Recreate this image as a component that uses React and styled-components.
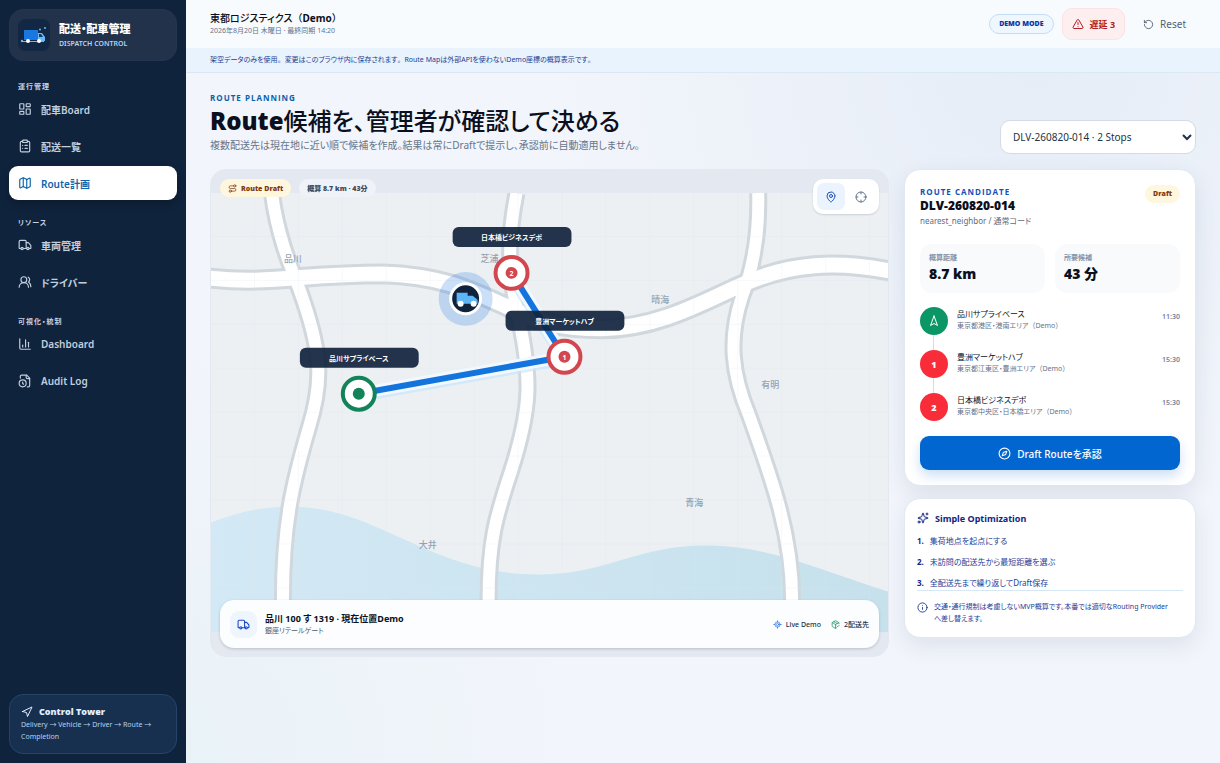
import React from "react";
import styled, { createGlobalStyle, css } from "styled-components";
import {
  LayoutDashboard, ClipboardList, Map as MapIcon, Truck, UsersRound, ChartColumn,
  Navigation, Navigation2, TriangleAlert, RotateCcw, Route, MapPin, Crosshair, LocateFixed,
  Compass, Sparkles, Info, PackageCheck,
} from "lucide-react";

const Global = createGlobalStyle`
  *, *::before, *::after { box-sizing: border-box; }
  body {
    margin: 0;
    font-family: "Noto Sans", "Noto Sans CJK JP", sans-serif;
    font-feature-settings: "palt";
    color: #0b1020;
    font-size: 12px;
  }
  button, select { font: inherit; font-feature-settings: inherit; }
  h1, h2, p, ol { margin: 0; padding: 0; }
`;

const heavy = css`
  font-family: "Open Sans", "Noto Sans CJK JP", sans-serif;
  font-weight: 800;
`;

const Shell = styled.div`
  display: grid;
  grid-template-columns: 186px 1fr;
  min-height: 100vh;
  background:
    radial-gradient(circle at 12% 100%, #e8f2f7 0, rgba(232, 242, 247, 0) 420px),
    radial-gradient(circle at 85% 8%, #e6edf7 0, rgba(230, 237, 247, 0) 480px),
    #f2f5fb;
`;

const Sidebar = styled.aside`
  display: flex;
  flex-direction: column;
  padding: 9px;
  background: #10233d;
  color: #c5d2e2;
`;

const Brand = styled.div`
  display: flex;
  align-items: center;
  gap: 9px;
  height: 52px;
  padding: 0 8px;
  border-radius: 14px;
  background: #21324a;
  border: 1px solid #24364f;
`;

const BrandText = styled.div`
  display: flex;
  flex-direction: column;
  font-size: 7px;
  line-height: 12px;
  font-weight: 600;
  color: #b6d3f5;
  strong { font-size: 11px; line-height: 18px; color: #ffffff; }
`;

const NavTitle = styled.div`
  margin: ${(p) => (p.$first ? "20px" : "17px")} 9px 0;
  font-size: 7px;
  line-height: 11px;
  font-weight: 700;
  letter-spacing: 1px;
`;

const NavList = styled.nav`
  display: flex;
  flex-direction: column;
  gap: 3px;
`;

const NavLink = styled.a`
  display: flex;
  align-items: center;
  gap: 9px;
  height: 34px;
  padding: 0 9px;
  border-radius: 9px;
  color: #c0cede;
  font-size: 10px;
  font-weight: 600;
  text-decoration: none;
  ${(p) => p.$active && css`
    background: #ffffff;
    color: #0d65ab;
    box-shadow: 0 4px 8px rgba(0, 0, 0, 0.25);
  `}
`;

const Tower = styled.div`
  margin-top: auto;
  padding: 10px 11px;
  border: 1px solid #244468;
  border-radius: 14px;
  background: #17304f;
  font-size: 7px;
  line-height: 12px;
  color: #b5d0ee;
`;

const TowerTitle = styled.div`
  display: flex;
  align-items: center;
  gap: 6px;
  height: 14px;
  color: #e1efff;
  font-size: 9px;
  ${heavy}
`;

const Main = styled.div`
  min-width: 0;
`;

const TopBar = styled.header`
  display: flex;
  align-items: center;
  justify-content: space-between;
  height: 48px;
  padding: 0 24px;
  background: #f8fbfe;
`;

const Company = styled.div`
  font-size: 7px;
  line-height: 12px;
  color: #64748b;
  div { font-size: 10px; line-height: 14px; font-weight: 500; color: #0b1020; }
`;

const Actions = styled.div`
  display: flex;
  align-items: center;
  gap: 8px;
`;

const DemoTag = styled.span`
  padding: 0 9px;
  border: 1px solid #c5dcf5;
  border-radius: 10px;
  background: #eef6fe;
  color: #10379f;
  font-size: 7px;
  line-height: 18px;
  ${heavy}
`;

const TopButton = styled.button`
  display: flex;
  align-items: center;
  gap: 6px;
  height: 32px;
  padding: 0 9px;
  border: 1px solid ${(p) => (p.$alert ? "#fde2e3" : "transparent")};
  border-radius: 10px;
  background: ${(p) => (p.$alert ? "#fdefef" : "transparent")};
  color: ${(p) => (p.$alert ? "#b01e24" : "#536174")};
  font-size: ${(p) => (p.$alert ? "9px" : "10px")};
  font-weight: ${(p) => (p.$alert ? 700 : 400)};
`;

const Notice = styled.div`
  padding: 0 24px;
  border-bottom: 1px solid #dbe8f4;
  background: #e9f3fd;
  color: #1d3e93;
  font-size: 7px;
  line-height: 24px;
`;

const Content = styled.main`
  padding: 17px 24px;
`;

const Heading = styled.div`
  display: flex;
  align-items: flex-end;
  justify-content: space-between;
  margin-bottom: 15px;
`;

const Eyebrow = styled.div`
  color: ${(p) => (p.$blue ? "#1450b8" : "#0b61ac")};
  font-size: 8px;
  line-height: ${(p) => (p.$blue ? "13px" : "15px")};
  letter-spacing: 1px;
  ${heavy}
  font-weight: 700;
`;

const Title = styled.h1`
  font-size: 24px;
  line-height: 32px;
  ${heavy}
  span { font-weight: 500; }
`;

const Lead = styled.p`
  color: #64748b;
  font-size: 10px;
  line-height: 17px;
`;

const StopSelect = styled.select`
  width: 196px;
  height: 34px;
  padding: 0 8px;
  border: 1px solid #d3dbe6;
  border-radius: 10px;
  background: #ffffff;
  color: #243244;
  font-size: 10px;
`;

const Columns = styled.div`
  display: grid;
  grid-template-columns: minmax(0, 679fr) minmax(0, 292fr);
  gap: 15px;
  align-items: start;
`;

const MapCard = styled.section`
  position: relative;
  display: flex;
  align-items: center;
  min-height: 488px;
  overflow: hidden;
  border: 1px solid #e4e9f1;
  border-radius: 16px;
  background: #e4e8f0;
  > svg { display: block; width: 100%; height: auto; }
`;

const MapTags = styled.div`
  position: absolute;
  top: 9px;
  left: 9px;
  display: flex;
  gap: 8px;
`;

const Pill = styled.span`
  display: flex;
  align-items: center;
  gap: 4px;
  height: 18px;
  padding: 0 8px;
  border-radius: 9px;
  font-size: 7px;
  ${heavy}
  background: ${(p) => (p.$draft ? "#fff6de" : "#eff3f9")};
  color: ${(p) => (p.$draft ? "#7e3a12" : "#3d4b60")};
`;

const MapTools = styled.div`
  position: absolute;
  top: 9px;
  right: 9px;
  display: flex;
  gap: 2px;
  padding: 4px;
  border-radius: 10px;
  background: #ffffff;
  box-shadow: 0 1px 2px rgba(15, 35, 60, 0.15);
`;

const ToolButton = styled.button`
  display: grid;
  place-items: center;
  width: 28px;
  height: 27px;
  padding: 0;
  border: 0;
  border-radius: 7px;
  background: ${(p) => (p.$on ? "#ebf4fe" : "transparent")};
  color: ${(p) => (p.$on ? "#1d4fb4" : "#64748b")};
`;

const VehicleBar = styled.div`
  position: absolute;
  left: 9px;
  right: 9px;
  bottom: 8px;
  display: flex;
  align-items: center;
  gap: 8px;
  height: 48px;
  padding: 0 10px;
  border-radius: 14px;
  background: #fbfdfe;
  box-shadow: 0 1px 3px rgba(15, 35, 60, 0.2);
`;

const VehicleIcon = styled.div`
  display: grid;
  place-items: center;
  width: 27px;
  height: 27px;
  border-radius: 9px;
  background: #eff5fd;
  color: #1d49c0;
`;

const VehicleText = styled.div`
  flex: 1;
  font-size: 7px;
  line-height: 11px;
  color: #4c5b70;
  strong { display: block; font-size: 9px; line-height: 12px; color: #0b1020; }
`;

const StatusList = styled.div`
  display: flex;
  gap: 10px;
`;

const Status = styled.span`
  display: flex;
  align-items: center;
  gap: 4px;
  font-size: 7px;
  font-weight: 500;
  color: #243244;
  svg { color: ${(p) => p.$tone}; }
`;

const Side = styled.div`
  display: flex;
  flex-direction: column;
  gap: 12px;
`;

const Card = styled.section`
  padding: ${(p) => (p.$tight ? "12px" : "15px")};
  border: 1px solid #e2e8f1;
  border-radius: 16px;
  background: #ffffff;
  box-shadow: 0 8px 22px rgba(40, 60, 100, 0.1);
`;

const CardHead = styled.div`
  display: flex;
  align-items: flex-start;
  justify-content: space-between;
  color: #5e6c80;
  font-size: 8px;
  line-height: 14px;
  h2 { color: #0b1020; font-size: 12px; line-height: 16px; ${heavy} }
`;

const Stats = styled.div`
  display: grid;
  grid-template-columns: 1fr 1fr;
  gap: 10px;
  margin: 16px 0 14px;
`;

const Stat = styled.div`
  height: 49px;
  padding: 8px 9px;
  border-radius: 12px;
  background: #f8fafc;
  color: #8492a8;
  font-size: 7px;
  line-height: 12px;
  font-weight: 700;
  strong { display: block; color: #0b1020; font-size: 14px; line-height: 20px; ${heavy} }
`;

const Stop = styled.li`
  position: relative;
  display: flex;
  gap: 9px;
  height: 43px;
  &:last-child { height: 28px; }
  &:not(:last-child)::before {
    content: "";
    position: absolute;
    left: 13px;
    top: 28px;
    bottom: 0;
    width: 1px;
    background: #d5dde7;
  }
`;

const Stops = styled.ol`
  list-style: none;
`;

const Badge = styled.span`
  display: grid;
  place-items: center;
  width: 28px;
  height: 28px;
  border-radius: 50%;
  background: ${(p) => (p.$start ? "#0a9765" : "#f92d3a")};
  color: #ffffff;
  font-size: 9px;
  ${heavy}
`;

const StopText = styled.div`
  flex: 1;
  padding-top: 1px;
  font-size: 7px;
  line-height: 11px;
  color: #64748b;
  strong { display: block; color: #0b1020; font-size: 8px; line-height: 12px; font-weight: 400; }
`;

const Time = styled.time`
  padding-top: 4px;
  color: #75849a;
  font-size: 7px;
  line-height: 11px;
  font-weight: 600;
`;

const Approve = styled.button`
  display: flex;
  align-items: center;
  justify-content: center;
  gap: 6px;
  width: 100%;
  height: 34px;
  margin-top: 15px;
  border: 0;
  border-radius: 9px;
  background: #0266d1;
  color: #ffffff;
  font-size: 10px;
  font-weight: 500;
  box-shadow: 0 6px 12px rgba(2, 102, 209, 0.2);
`;

const RuleTitle = styled.h2`
  display: flex;
  align-items: center;
  gap: 6px;
  height: 14px;
  margin-bottom: 5px;
  color: #14257f;
  font-size: 9px;
  font-weight: 700;
`;

const Rules = styled.ol`
  color: #1c3d9b;
  font-size: 8px;
  line-height: 21px;
  list-style: none;
  li { display: flex; gap: 6px; }
  b { color: #12288a; }
`;

const Hint = styled.p`
  display: flex;
  gap: 6px;
  padding: 10px 10px 0 0;
  margin-top: -3px;
  border-top: 1px solid #d6e7f5;
  color: #1c3d9b;
  font-size: 7px;
  line-height: 12px;
  svg { flex: none; margin-top: 1px; }
`;

const FullWidth = styled.span`
  font-feature-settings: normal;
`;

/* Kana are set proportionally; punctuation keeps its full-width box. */
const Ja = ({ children }) =>
  children.split(/([、。（）])/).map((part, i) => (i % 2 ? <FullWidth key={i}>{part}</FullWidth> : part));

const LogoTruck = () => (
  <svg width="32" height="32" viewBox="0 0 32 32" aria-hidden="true">
    <rect width="32" height="32" rx="8" fill="#122743" />
    <path d="M6 11h14v10H6z" fill="#1977e0" />
    <path d="M20 14h4l3 4v4h-7z" fill="#69b8fa" />
    <path d="M21 15h2l2 3h-4z" fill="#17375c" />
    <path d="M3 22.500h23" stroke="#69b8fa" />
    <circle cx="10" cy="22" r="2" fill="#fff" />
    <circle cx="21" cy="22" r="2" fill="#fff" />
    <circle cx="22" cy="10.500" r="1" fill="#69b8fa" />
    <circle cx="27" cy="9" r="1" fill="#69b8fa" />
    <circle cx="4" cy="22" r="1.200" fill="#69b8fa" />
  </svg>
);

const AuditIcon = ({ size }) => (
  <svg width={size} height={size} viewBox="0 0 24 24" fill="none" stroke="currentColor" strokeWidth="2" strokeLinecap="round" strokeLinejoin="round" aria-hidden="true">
    <path d="M16 22h2a2 2 0 0 0 2-2V7l-5-5H6a2 2 0 0 0-2 2v3" />
    <path d="M14 2v4a2 2 0 0 0 2 2h4" />
    <circle cx="8" cy="16" r="6" />
    <path d="M9.500 17.500 8 16.250V14" />
  </svg>
);

const roads = [
  { d: "M-4 85C60 92 90 81 172 81C235 83 265 100 299 115C330 130 350 136 391 136C450 136 500 105 536 90C580 71 625 67 684 79", w: 21 },
  { d: "M61 0C66 40 78 70 88 95C112 160 112 190 98 235C82 290 72 330 72 407V440", w: 18 },
  { d: "M306 0C298 40 297 75 306 115C322 185 321 215 300 280C285 325 278 350 278 407V440", w: 18 },
  { d: "M548 0C549 40 543 75 532 103C518 145 521 180 539 223C560 282 582 340 582 407V440", w: 18 },
];

const places = [
  ["品川", 82, 66], ["芝浦", 279, 66], ["晴海", 450, 107], ["有明", 560, 192], ["青海", 484, 310], ["大井", 217, 353],
];

const Pin = ({ x, y, n, label }) => (
  <g>
    <rect x={x - 59} y={y - 46} width="119" height="20" rx="6" fill="#10233d" fillOpacity="0.92" />
    <text x={x} y={y - 33} textAnchor="middle" fontSize="7" fontWeight="700" fill="#fff">{label}</text>
    <circle cx={x} cy={y} r="16" fill="#fff" stroke={n ? "#d2464e" : "#138359"} strokeWidth="4" />
    <circle cx={x} cy={y} r="6" fill={n ? "#d2464e" : "#138359"} />
    {n && <text x={x} y={y + 3} textAnchor="middle" fontSize="7" fontWeight="700" fill="#fff">{n}</text>}
  </g>
);

const CityMap = () => (
  <svg viewBox="0 0 678 440" role="img" aria-label="Route Map">
    <defs>
      <pattern id="grid" width="44" height="44" patternUnits="userSpaceOnUse">
        <path d="M44 0V44H0" fill="none" stroke="#dce3e9" />
      </pattern>
      <linearGradient id="water" x1="0" x2="1">
        <stop offset="0" stopColor="#d3e9f5" />
        <stop offset="1" stopColor="#c6e1ec" />
      </linearGradient>
    </defs>
    <rect width="678" height="440" fill="#ecf0f3" />
    <path d="M0 330C55 309 100 308 155 330C215 355 260 383 330 382C400 381 425 353 496 353C560 353 610 378 678 399V440H0Z" fill="url(#water)" />
    {roads.map((r) => <path key={r.d} d={r.d} fill="none" stroke="#d0d7dd" strokeWidth={r.w} />)}
    {roads.map((r) => <path key={r.d} d={r.d} fill="none" stroke="#fff" strokeWidth={r.w - 6} />)}
    <rect width="678" height="440" fill="url(#grid)" opacity="0.5" />
    {places.map(([t, x, y]) => (
      <text key={t} x={x} y={y + 3} textAnchor="middle" fontSize="9" fontWeight="500" fill="#94a3b3">{t}</text>
    ))}
    <path d="M148 203L354 166L301 82" fill="none" stroke="#c9e5fb" strokeOpacity="0.7" strokeWidth="13" />
    <path d="M148 201L354 164L301 80" fill="none" stroke="#f2f9fe" strokeWidth="12" />
    <path d="M148 201L354 164L301 80" fill="none" stroke="#1474dd" strokeWidth="6" />
    <circle cx="255" cy="106" r="27" fill="#1474dd" fillOpacity="0.22" />
    <circle cx="255" cy="106" r="15" fill="#10233d" stroke="#fff" strokeWidth="3" />
    <path d="M246 100h11v3h5l5 4v4h-21z" fill="#5db6f5" />
    <circle cx="250" cy="111" r="3" fill="#fff" />
    <circle cx="263" cy="111" r="3" fill="#fff" />
    <Pin x={148} y={201} label="品川サプライベース" />
    <Pin x={354} y={164} n="1" label="豊洲マーケットハブ" />
    <Pin x={301} y={80} n="2" label="日本橋ビジネスデポ" />
  </svg>
);

const groups = [
  ["運行管理", [[LayoutDashboard, "配車Board"], [ClipboardList, "配送一覧"], [MapIcon, "Route計画", true]]],
  ["リソース", [[Truck, "車両管理"], [UsersRound, "ドライバー"]]],
  ["可視化・統制", [[ChartColumn, "Dashboard"], [AuditIcon, "Audit Log"]]],
];

const stops = [
  ["", "品川サプライベース", "東京都港区・港南エリア（Demo）", "11:30"],
  ["1", "豊洲マーケットハブ", "東京都江東区・豊洲エリア（Demo）", "15:30"],
  ["2", "日本橋ビジネスデポ", "東京都中央区・日本橋エリア（Demo）", "15:30"],
];

const rules = ["集荷地点を起点にする", "未訪問の配送先から最短距離を選ぶ", "全配送先まで繰り返してDraft保存"];

export default function App() {
  return (
    <Shell>
      <Global />
      <Sidebar>
        <Brand>
          <LogoTruck />
          <BrandText><strong>配送・配車管理</strong>DISPATCH CONTROL</BrandText>
        </Brand>
        {groups.map(([title, items], i) => (
          <React.Fragment key={title}>
            <NavTitle $first={i === 0}>{title}</NavTitle>
            <NavList aria-label={title}>
              {items.map(([Icon, label, active]) => (
                <NavLink key={label} href="#" $active={active}><Icon size={14} />{label}</NavLink>
              ))}
            </NavList>
          </React.Fragment>
        ))}
        <Tower>
          <TowerTitle><Navigation size={12} />Control Tower</TowerTitle>
          Delivery → Vehicle → Driver → Route → Completion
        </Tower>
      </Sidebar>
      <Main>
        <TopBar>
          <Company>
            <div>東都ロジスティクス<Ja>（</Ja><b>Demo</b><Ja>）</Ja></div>
            2026年8月20日 木曜日 · 最終同期 14:20
          </Company>
          <Actions>
            <DemoTag>DEMO MODE</DemoTag>
            <TopButton $alert><TriangleAlert size={12} />遅延 3</TopButton>
            <TopButton><RotateCcw size={11} />Reset</TopButton>
          </Actions>
        </TopBar>
        <Notice><Ja>架空データのみを使用。変更はこのブラウザ内に保存されます。Route Mapは外部APIを使わないDemo座標の概算表示です。</Ja></Notice>
        <Content>
          <Heading>
            <div>
              <Eyebrow>ROUTE PLANNING</Eyebrow>
              <Title>Route<span>候補を、管理者が確認して決める</span></Title>
              <Lead>複数配送先は現在地に近い順で候補を作成。結果は常にDraftで提示し、承認前に自動適用しません。</Lead>
            </div>
            <StopSelect aria-label="配送"><option>DLV-260820-014 · 2 Stops</option></StopSelect>
          </Heading>
          <Columns>
            <MapCard>
              <CityMap />
              <MapTags>
                <Pill $draft><Route size={9} />Route Draft</Pill>
                <Pill>概算 8.7 km · 43分</Pill>
              </MapTags>
              <MapTools>
                <ToolButton $on aria-label="ピン"><MapPin size={12} /></ToolButton>
                <ToolButton aria-label="中心"><Crosshair size={12} /></ToolButton>
              </MapTools>
              <VehicleBar>
                <VehicleIcon><Truck size={13} /></VehicleIcon>
                <VehicleText><strong>品川 100 す 1319 · 現在位置Demo</strong>銀座リテールゲート</VehicleText>
                <StatusList>
                  <Status $tone="#3478d8"><LocateFixed size={9} />Live Demo</Status>
                  <Status $tone="#17976b"><PackageCheck size={9} />2配送先</Status>
                </StatusList>
              </VehicleBar>
            </MapCard>
            <Side>
              <Card>
                <CardHead>
                  <div><Eyebrow $blue>ROUTE CANDIDATE</Eyebrow><h2>DLV-260820-014</h2>nearest_neighbor / 通常コード</div>
                  <Pill $draft>Draft</Pill>
                </CardHead>
                <Stats>
                  <Stat>概算距離<strong>8.7 km</strong></Stat>
                  <Stat>所要候補<strong>43 分</strong></Stat>
                </Stats>
                <Stops>
                  {stops.map(([n, name, area, time]) => (
                    <Stop key={name}>
                      <Badge $start={!n}>{n || <Navigation2 size={12} />}</Badge>
                      <StopText><strong>{name}</strong><Ja>{area}</Ja></StopText>
                      <Time>{time}</Time>
                    </Stop>
                  ))}
                </Stops>
                <Approve><Compass size={13} />Draft Routeを承認</Approve>
              </Card>
              <Card $tight>
                <RuleTitle><Sparkles size={12} />Simple Optimization</RuleTitle>
                <Rules>{rules.map((r, i) => <li key={r}><b>{i + 1}.</b>{r}</li>)}</Rules>
                <Hint><Info size={11} /><span>交通・通行規制は考慮しないMVP概算です。本番では適切なRouting Providerへ差し替えます。</span></Hint>
              </Card>
            </Side>
          </Columns>
        </Content>
      </Main>
    </Shell>
  );
}
